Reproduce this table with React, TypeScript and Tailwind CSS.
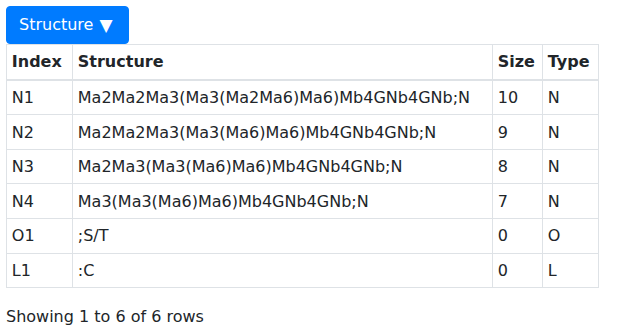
import React from 'react'

type Row = {
  index:     string
  structure: string
  size:      number
  type:      string
}

const rows: Row[] = [
  { index: 'N1', structure: 'Ma2Ma2Ma3(Ma3(Ma2Ma6)Ma6)Mb4GNb4GNb;N', size: 10, type: 'N' },
  { index: 'N2', structure: 'Ma2Ma2Ma3(Ma3(Ma6)Ma6)Mb4GNb4GNb;N',    size: 9,  type: 'N' },
  { index: 'N3', structure: 'Ma2Ma3(Ma3(Ma6)Ma6)Mb4GNb4GNb;N',       size: 8,  type: 'N' },
  { index: 'N4', structure: 'Ma3(Ma3(Ma6)Ma6)Mb4GNb4GNb;N',          size: 7,  type: 'N' },
  { index: 'O1', structure: ';S/T',                                   size: 0,  type: 'O' },
  { index: 'L1', structure: ':C',                                     size: 0,  type: 'L' },
]

const th = 'border border-[#dee2e6] border-b-2 px-[4.8px] py-[4.8px] text-left font-bold align-bottom'
const td = 'border border-[#dee2e6] px-[4.8px] pt-[5.5px] pb-[4.1px] align-top'

export default function App() {
  return (
    <div className="min-h-screen bg-white p-[6px] text-[16px] leading-[24px] text-[#212529] font-['DejaVu_Sans',Verdana,sans-serif]">
      {/* toolbar */}
      <button className="flex h-[38px] w-[123px] items-center gap-[6px] rounded-[4px] border border-[#007bff] bg-[#007bff] px-[12px] text-white">
        Structure <span className="text-[17px]">▼</span>
      </button>

      {/* table */}
      <table className="w-[593px] border-collapse">
        <thead>
          <tr>
            <th className={`${th} w-[66px]`}>Index</th>
            <th className={th}>Structure</th>
            <th className={`${th} w-[50px]`}>Size</th>
            <th className={`${th} w-[56px]`}>Type</th>
          </tr>
        </thead>
        <tbody>
          {rows.map(r => (
            <tr key={r.index}>
              <td className={td}>{r.index}</td>
              <td className={td}>{r.structure}</td>
              <td className={td}>{r.size}</td>
              <td className={td}>{r.type}</td>
            </tr>
          ))}
        </tbody>
      </table>

      {/* footer */}
      <div className="mt-[17px]">Showing 1 to 6 of 6 rows</div>
    </div>
  )
}
